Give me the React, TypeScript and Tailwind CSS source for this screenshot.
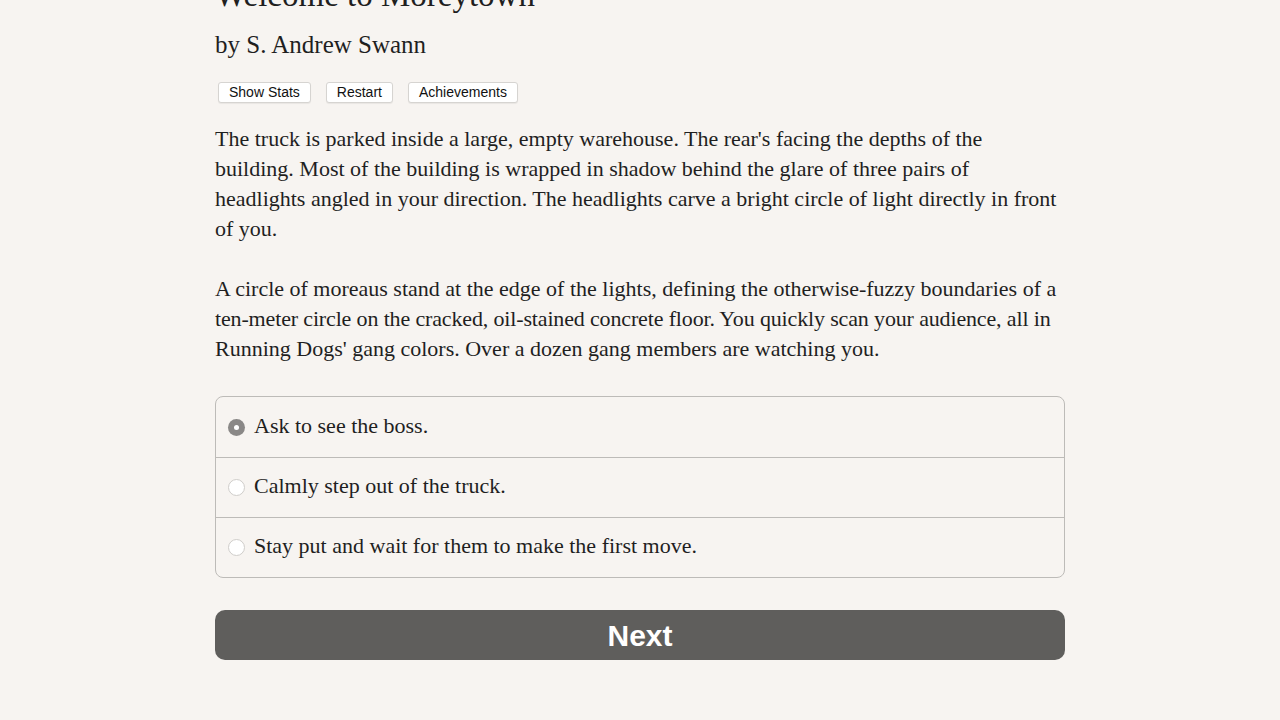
const serif = "font-['Liberation_Serif','DejaVu_Serif',serif]"
const sans = "font-['Liberation_Sans',Arial,sans-serif]"

const choices = [
    "Ask to see the boss.",
    "Calmly step out of the truck.",
    "Stay put and wait for them to make the first move.",
]

export default function App() {
    return (
        <div className="flex min-h-screen w-full flex-col bg-[#f7f4f1] text-[#1f1f1f]">
            <div className={`mx-auto flex w-[850px] flex-col ${serif}`}>
                <h1 className="mt-[-23px] h-[36px] text-[33px] leading-[36px]">
                    Welcome to Moreytown
                </h1>
                <div className="mt-[17px] text-[25px] leading-[30px]">
                    by S. Andrew Swann
                </div>

                <div className={`mt-[22px] flex gap-[15px] pl-[3px] text-[14px] ${sans}`}>
                    {["Show Stats", "Restart", "Achievements"].map((b) => (
                        <button
                            key={b}
                            className="h-[21px] rounded-[3px] border border-[#d6d4d1] bg-white px-[10px] leading-[19px] text-[#111] shadow-[0_1px_1px_rgba(0,0,0,0.06)]"
                        >
                            {b}
                        </button>
                    ))}
                </div>

                <div className="mt-[21px] whitespace-nowrap text-[22px] leading-[30px]">
                    <p>
                        The truck is parked inside a large, empty warehouse. The rear's facing the depths of the
                        <br />
                        building. Most of the building is wrapped in shadow behind the glare of three pairs of
                        <br />
                        headlights angled in your direction. The headlights carve a bright circle of light directly in front
                        <br />
                        of you.
                    </p>
                    <p className="mt-[30px]">
                        A circle of moreaus stand at the edge of the lights, defining the otherwise-fuzzy boundaries of a
                        <br />
                        <span className="tracking-[-0.15px]">
                            ten-meter circle on the cracked, oil-stained concrete floor. You quickly scan your audience, all in
                        </span>
                        <br />
                        Running Dogs' gang colors. Over a dozen gang members are watching you.
                    </p>
                </div>

                <div className="mt-[32px] overflow-hidden rounded-[8px] border border-[#bdbbb8]">
                    {choices.map((c, i) => (
                        <label
                            key={c}
                            className={`flex h-[60px] items-center gap-[9px] pb-[4px] pl-[12px] text-[22px] ${i > 0 ? "border-t border-[#bdbbb8]" : ""}`}
                        >
                            {i === 0 ? (
                                <span className="mt-[4px] flex size-[17px] shrink-0 items-center justify-center rounded-full bg-[#8a8887]">
                                    <span className="size-[5px] rounded-full bg-white" />
                                </span>
                            ) : (
                                <span className="mt-[4px] size-[17px] shrink-0 rounded-full border border-[#cfcdca] bg-white" />
                            )}
                            <span>{c}</span>
                        </label>
                    ))}
                </div>

                <button className={`mt-[32px] flex h-[50px] w-full items-center justify-center rounded-[10px] bg-[#5f5e5c] text-[30px] font-bold text-white ${sans}`}>
                    Next
                </button>
            </div>
        </div>
    )
}
